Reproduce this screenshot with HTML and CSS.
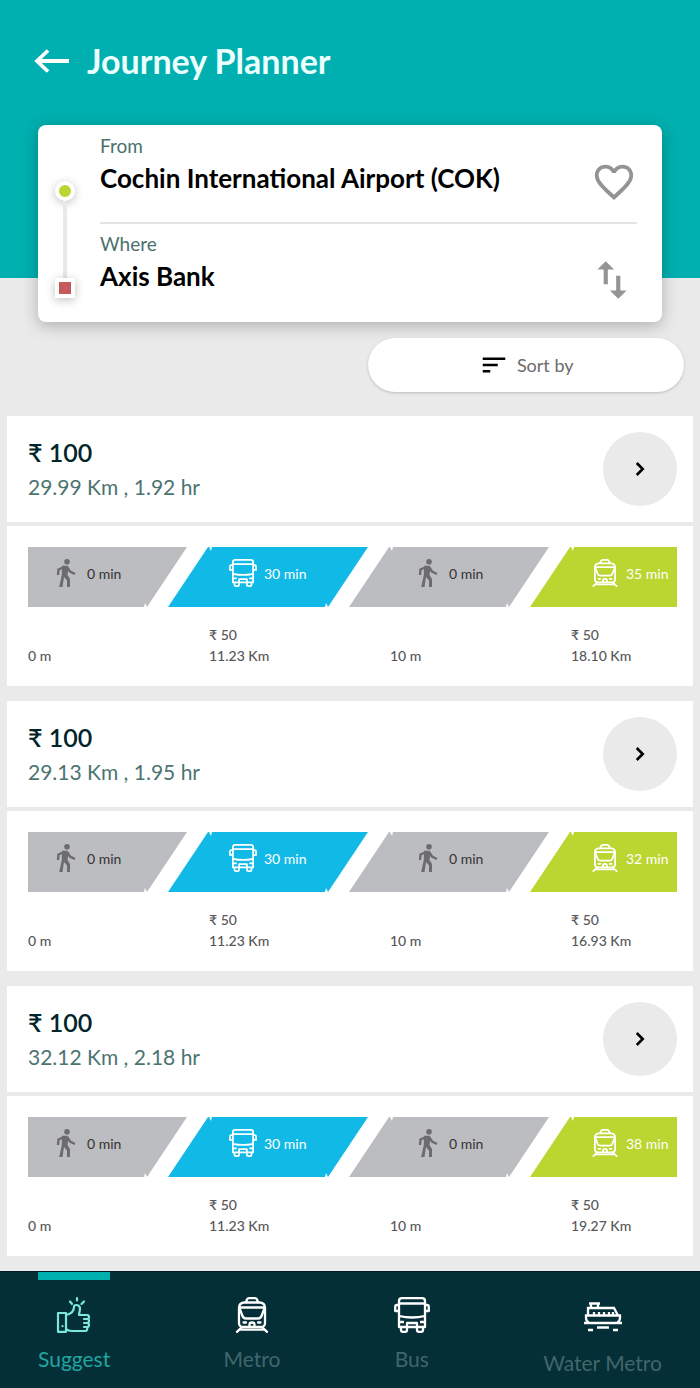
FILE: index.html
```html
<!DOCTYPE html>
<html lang="en">
<head>
    <meta charset="UTF-8">
    <meta name="viewport" content="width=device-width, initial-scale=1.0">
    <title>Journey Planner</title>
    <link rel="stylesheet" href="styles.css">
</head>
<body>
    <!-- Shared icons -->
    <svg class="sprite" aria-hidden="true">
        <symbol id="icon-walk" viewBox="0 0 28 28">
            <circle cx="15" cy="2.8" r="2.8" fill="currentColor"/>
            <path d="M15 8 L18 12.5 L23 15 M12 8 L6.5 10.5 L6 16" fill="none" stroke="currentColor" stroke-width="2.4"/>
            <path d="M10 6.8 H15.5 L16.5 9 L15.5 16 L18 20 V28 H15 V21.5 L12 18 L10.5 28 H7.2 L9.8 16 Z" fill="currentColor"/>
        </symbol>
        <symbol id="icon-bus" viewBox="0 0 36 36">
            <g fill="none" stroke="currentColor" stroke-width="2.3" stroke-linejoin="round">
                <path d="M5 30 V4 Q5 1.2 8 1.2 H28 Q31 1.2 31 4 V30 Z"/>
                <path d="M5 6.5 H31 M5 19 Q18 22 31 19 M5 25 H10 M26 25 H31 M13 30 V26 H23 V30"/>
                <path d="M5 8 H3 Q1.2 8 1.2 10 V14 H5 M31 8 H33 Q34.8 8 34.8 10 V14 H31"/>
                <path d="M7 30 V33 Q7 34.8 9 34.8 H11 Q13 34.8 13 33 V30 M23 30 V33 Q23 34.8 25 34.8 H27 Q29 34.8 29 33 V30"/>
            </g>
        </symbol>
        <symbol id="icon-metro" viewBox="0 0 36 36">
            <g fill="none" stroke="currentColor" stroke-width="2.3" stroke-linejoin="round" stroke-linecap="round">
                <path d="M10 5.5 H26 Q31 6 31 11 V26 Q31 30 27 30 H9 Q5 30 5 26 V11 Q5 6 10 5.5 Z"/>
                <path d="M12 5 L13 2.5 Q13.5 1.2 15 1.2 H21 Q22.5 1.2 23 2.5 L24 5"/>
                <path d="M6 10.5 H30 M6 12.5 L8.5 19 Q9.5 21.5 12 21.5 H24 Q26.5 21.5 27.5 19 L30 12.5"/>
                <path d="M9.5 25.5 H12 M24 25.5 H26.5 M15.5 29.5 V27.5 Q15.5 25.5 18 25.5 Q20.5 25.5 20.5 27.5 V29.5"/>
                <path d="M8 30 L3 34.8 M28 30 L33 34.8 M6 32.6 H30"/>
            </g>
        </symbol>
        <symbol id="icon-chevron" viewBox="0 0 24 24">
            <path d="M9 6.5 L14.5 12 L9 17.5" fill="none" stroke="currentColor" stroke-width="2.4"/>
        </symbol>
    </svg>

    <header class="header">
        <div class="title-bar">
            <button class="icon-button" type="button" aria-label="Back">
                <svg width="36" height="26" viewBox="0 0 36 26"><path d="M35 13 H3 M14 2.5 L3 13 L14 23.5" fill="none" stroke="currentColor" stroke-width="3.8"/></svg>
            </button>
            <h1>Journey Planner</h1>
        </div>
        <form class="search-card">
            <div class="rail">
                <span class="rail-start"></span>
                <span class="rail-line"></span>
                <span class="rail-end"></span>
            </div>
            <div class="fields">
                <div class="field">
                    <div class="field-text">
                        <label for="from">From</label>
                        <input type="text" id="from" value="Cochin International Airport (COK)">
                    </div>
                    <button class="icon-button" type="button" aria-label="Save journey">
                        <svg width="46" height="46" viewBox="0 0 24 24"><path fill="currentColor" d="M16.5 3c-1.74 0-3.41.81-4.5 2.09C10.91 3.81 9.24 3 7.5 3 4.42 3 2 5.42 2 8.5c0 3.78 3.4 6.86 8.55 11.54L12 21.35l1.45-1.32C18.6 15.36 22 12.28 22 8.5 22 5.42 19.58 3 16.5 3zm-4.4 15.55l-.1.1-.1-.1C7.14 14.24 4 11.39 4 8.5 4 6.5 5.5 5 7.5 5c1.54 0 3.04.99 3.57 2.36h1.87C13.46 5.99 14.96 5 16.5 5c2 0 3.5 1.5 3.5 3.5 0 2.89-3.14 5.74-7.9 10.05z"/></svg>
                    </button>
                </div>
                <div class="field">
                    <div class="field-text">
                        <label for="where">Where</label>
                        <input type="text" id="where" value="Axis Bank">
                    </div>
                    <button class="icon-button" type="button" aria-label="Swap">
                        <svg width="50" height="50" viewBox="0 0 24 24"><path fill="currentColor" d="M9 3L5 6.99h3V14h2V6.99h3L9 3zm7 14.01V10h-2v7.01h-3L15 21l4-3.99h-3z"/></svg>
                    </button>
                </div>
            </div>
        </form>
    </header>

    <main class="results">
        <button class="sort" type="button">
            <svg width="30" height="30" viewBox="0 0 24 24"><path fill="currentColor" d="M3 18h6v-2H3v2zM3 6v2h18V6H3zm0 7h12v-2H3v2z"/></svg>
            <span>Sort by</span>
        </button>

        <article class="route">
            <div class="route-head">
                <div>
                    <h2>₹ 100</h2>
                    <p>29.99 Km , 1.92 hr</p>
                </div>
                <button class="open" type="button" aria-label="Open route"><svg width="26" height="26"><use href="#icon-chevron"/></svg></button>
            </div>
            <ol class="legs">
                <li class="leg walk">
                    <div class="bar"><svg><use href="#icon-walk"/></svg>0 min</div>
                    <p>0 m</p>
                </li>
                <li class="leg bus">
                    <div class="bar"><svg><use href="#icon-bus"/></svg>30 min</div>
                    <p>₹ 50<br>11.23 Km</p>
                </li>
                <li class="leg walk">
                    <div class="bar"><svg><use href="#icon-walk"/></svg>0 min</div>
                    <p>10 m</p>
                </li>
                <li class="leg metro">
                    <div class="bar"><svg><use href="#icon-metro"/></svg>35 min</div>
                    <p>₹ 50<br>18.10 Km</p>
                </li>
            </ol>
        </article>

        <article class="route">
            <div class="route-head">
                <div>
                    <h2>₹ 100</h2>
                    <p>29.13 Km , 1.95 hr</p>
                </div>
                <button class="open" type="button" aria-label="Open route"><svg width="26" height="26"><use href="#icon-chevron"/></svg></button>
            </div>
            <ol class="legs">
                <li class="leg walk">
                    <div class="bar"><svg><use href="#icon-walk"/></svg>0 min</div>
                    <p>0 m</p>
                </li>
                <li class="leg bus">
                    <div class="bar"><svg><use href="#icon-bus"/></svg>30 min</div>
                    <p>₹ 50<br>11.23 Km</p>
                </li>
                <li class="leg walk">
                    <div class="bar"><svg><use href="#icon-walk"/></svg>0 min</div>
                    <p>10 m</p>
                </li>
                <li class="leg metro">
                    <div class="bar"><svg><use href="#icon-metro"/></svg>32 min</div>
                    <p>₹ 50<br>16.93 Km</p>
                </li>
            </ol>
        </article>

        <article class="route">
            <div class="route-head">
                <div>
                    <h2>₹ 100</h2>
                    <p>32.12 Km , 2.18 hr</p>
                </div>
                <button class="open" type="button" aria-label="Open route"><svg width="26" height="26"><use href="#icon-chevron"/></svg></button>
            </div>
            <ol class="legs">
                <li class="leg walk">
                    <div class="bar"><svg><use href="#icon-walk"/></svg>0 min</div>
                    <p>0 m</p>
                </li>
                <li class="leg bus">
                    <div class="bar"><svg><use href="#icon-bus"/></svg>30 min</div>
                    <p>₹ 50<br>11.23 Km</p>
                </li>
                <li class="leg walk">
                    <div class="bar"><svg><use href="#icon-walk"/></svg>0 min</div>
                    <p>10 m</p>
                </li>
                <li class="leg metro">
                    <div class="bar"><svg><use href="#icon-metro"/></svg>38 min</div>
                    <p>₹ 50<br>19.27 Km</p>
                </li>
            </ol>
        </article>
    </main>

    <nav class="tabs">
        <a class="tab active" href="#suggest">
            <svg width="36" height="36" viewBox="0 0 36 36">
                <g fill="none" stroke="currentColor" stroke-width="2.2" stroke-linejoin="round" stroke-linecap="round">
                    <path d="M2 16 H10 V34.8 H2 Z M10 18 C15 17 18 15 18 10 Q18 8 20 8 Q24 8 24 12 L23 18 H31 Q33 18 33 20 Q33 22 31 22 H28 M31 22 Q33 22 33 24 Q33 26 31 26 H28 M31 26 Q33 26 33 28 Q33 30 31 30 H28 M31 30 Q32 34 29 34 H16 Q12 34 10 32 M6.5 29 V29.2"/>
                    <path d="M21 1.2 V3.5 M14 4.5 L16 7 M28 4.5 L25.5 7"/>
                </g>
            </svg>
            Suggest
        </a>
        <a class="tab" href="#metro">
            <svg width="36" height="36"><use href="#icon-metro"/></svg>
            Metro
        </a>
        <a class="tab" href="#bus">
            <svg width="36" height="36"><use href="#icon-bus"/></svg>
            Bus
        </a>
        <a class="tab" href="#water-metro">
            <svg width="40" height="40" viewBox="0 0 40 40">
                <g fill="none" stroke="currentColor" stroke-width="2.3">
                    <path d="M1 26 H39 M6 26 Q3 24 3 21 V18.5 H37 V21 Q37 24 34 26 M5 18.5 V11 H31 L35 18.5 M8 11 V6.5 H15 V11 M6 6.5 H17"/>
                    <path d="M11 18 V15 M16 18 V15 M21 18 V15 M26 18 V15 M30 18 V15"/>
                    <path d="M5 33 H10 M14 30.5 H26 M30 33 H35"/>
                </g>
            </svg>
            Water Metro
        </a>
    </nav>
</body>
</html>
```
FILE: styles.css
```css
* {
    box-sizing: border-box;
}
body {
    margin: 0;
    min-height: 100vh;
    display: flex;
    flex-direction: column;
    background: #eaeaea;
    font-family: Lato, "Noto Sans", sans-serif;
    color: #00252b;
}
h1, h2, p {
    margin: 0;
}
button, input {
    font-family: inherit;
    border: none;
    padding: 0;
    background: none;
}
button {
    cursor: pointer;
}
svg {
    display: block;
    flex: none;
}
.sprite {
    position: absolute;
    width: 0;
    height: 0;
}
.icon-button {
    color: #949496;
}

/* Header */
.header {
    padding: 35px 38px 0;
    background: linear-gradient(#00afaf 278px, transparent 278px);
}
.title-bar {
    display: flex;
    align-items: center;
    gap: 17px;
    height: 52px;
    margin: 0 -4px 38px;
    color: #ecffff;
}
.title-bar .icon-button {
    color: #fff;
}
h1 {
    font-size: 34px;
    line-height: 52px;
    font-weight: 700;
}
.search-card {
    display: flex;
    background: #fff;
    border-radius: 8px;
    box-shadow: 0 4px 16px rgba(0, 0, 0, 0.25);
}
.rail {
    display: flex;
    flex-direction: column;
    align-items: center;
    width: 54px;
    padding: 56px 0 24px;
}
.rail-start, .rail-end {
    width: 20px;
    height: 20px;
    border: 4px solid #fff;
    box-shadow: 0 2px 10px rgba(0, 0, 0, 0.25);
}
.rail-start {
    border-radius: 50%;
    background: #b9d531;
}
.rail-end {
    background: #c55a5c;
}
.rail-line {
    flex: 1;
    width: 4px;
    background: #e8e8e8;
}
.fields {
    flex: 1;
    padding: 1px 25px 2px 8px;
}
.field {
    display: flex;
    align-items: center;
}
.field:first-child {
    border-bottom: 2px solid #e4e4e4;
}
.field-text {
    flex: 1;
    padding: 8px 0 24px;
}
.field .icon-button {
    padding-top: 16px;
}
.field label {
    display: block;
    font-size: 19px;
    line-height: 24px;
    color: #4b706e;
}
.field input {
    display: block;
    width: 100%;
    height: 40px;
    font-size: 26px;
    font-weight: 700;
    color: #000;
}

/* Results */
.results {
    flex: 1;
    display: flex;
    flex-direction: column;
    gap: 15px;
    padding: 16px 7px 15px;
}
.sort {
    display: flex;
    align-items: center;
    justify-content: center;
    gap: 8px;
    align-self: flex-end;
    width: 46%;
    height: 54px;
    margin: 0 9px 9px;
    border-radius: 27px;
    background: #fff;
    box-shadow: 0 1px 3px rgba(0, 0, 0, 0.2);
    font-size: 18px;
    color: #000;
}
.sort span {
    color: #6b6b6b;
}
.route-head {
    display: flex;
    align-items: center;
    justify-content: space-between;
    height: 106px;
    margin-bottom: 4px;
    padding: 0 16px 0 21px;
    background: #fff;
}
.route-head h2 {
    font-size: 25px;
    line-height: 36px;
    font-weight: 600;
}
.route-head p {
    font-size: 21px;
    line-height: 34px;
    color: #4b7471;
}
.open {
    display: flex;
    align-items: center;
    justify-content: center;
    width: 74px;
    height: 74px;
    border-radius: 50%;
    background: #eaeaea;
    color: #000;
}
.legs {
    display: grid;
    grid-template-columns: repeat(3, 1fr) 106px;
    margin: 0;
    padding: 21px 16px 20px 21px;
    list-style: none;
    background: #fff;
}
.leg {
    display: flex;
    flex-direction: column;
    justify-content: space-between;
    height: 119px;
    font-size: 14px;
    line-height: 21px;
    color: #58585a;
}
.leg p {
    font-weight: 500;
}
.bar {
    display: flex;
    align-items: center;
    gap: 7px;
    height: 60px;
    margin: 0 22px 0 -41px;
    padding: 0 0 8px 61px;
    clip-path: polygon(40px 0, 41px 0, 43px 4px, 44px 0, 100% 0, calc(100% - 40px) 100%, calc(100% - 42px) 56px, calc(100% - 43px) 100%, 0 100%);
    color: #fff;
    white-space: nowrap;
}
.bar svg {
    width: 28px;
    height: 28px;
}
.walk .bar {
    padding-left: 65px;
    background: #bcbdc1;
    color: #333;
}
.walk svg {
    color: #6c6c6e;
}
.bus .bar {
    background: #11bae6;
}
.metro .bar {
    background: #bbd531;
}
.leg:first-child .bar {
    margin-left: 0;
    padding-left: 24px;
    clip-path: polygon(0 0, 100% 0, calc(100% - 40px) 100%, calc(100% - 42px) 56px, calc(100% - 43px) 100%, 0 100%);
}
.leg:last-child .bar {
    margin-right: 0;
    clip-path: polygon(40px 0, 41px 0, 43px 4px, 44px 0, 100% 0, 100% 100%, 0 100%);
}

/* Bottom tabs */
.tabs {
    display: flex;
    justify-content: space-between;
    height: 117px;
    padding: 0 38px;
    border-top: 1px solid #001a1f;
    background: #042f36;
}
.tab {
    display: flex;
    flex-direction: column;
    align-items: center;
    gap: 10px;
    padding-top: 17px;
    border-top: 8px solid transparent;
    font-size: 21px;
    line-height: 32px;
    color: #41666c;
    text-decoration: none;
}
.tab svg {
    color: #fff;
}
.tab.active {
    border-color: #00afaf;
    color: #22a5a2;
}
.tab.active svg {
    color: #7ce8dd;
}
```
